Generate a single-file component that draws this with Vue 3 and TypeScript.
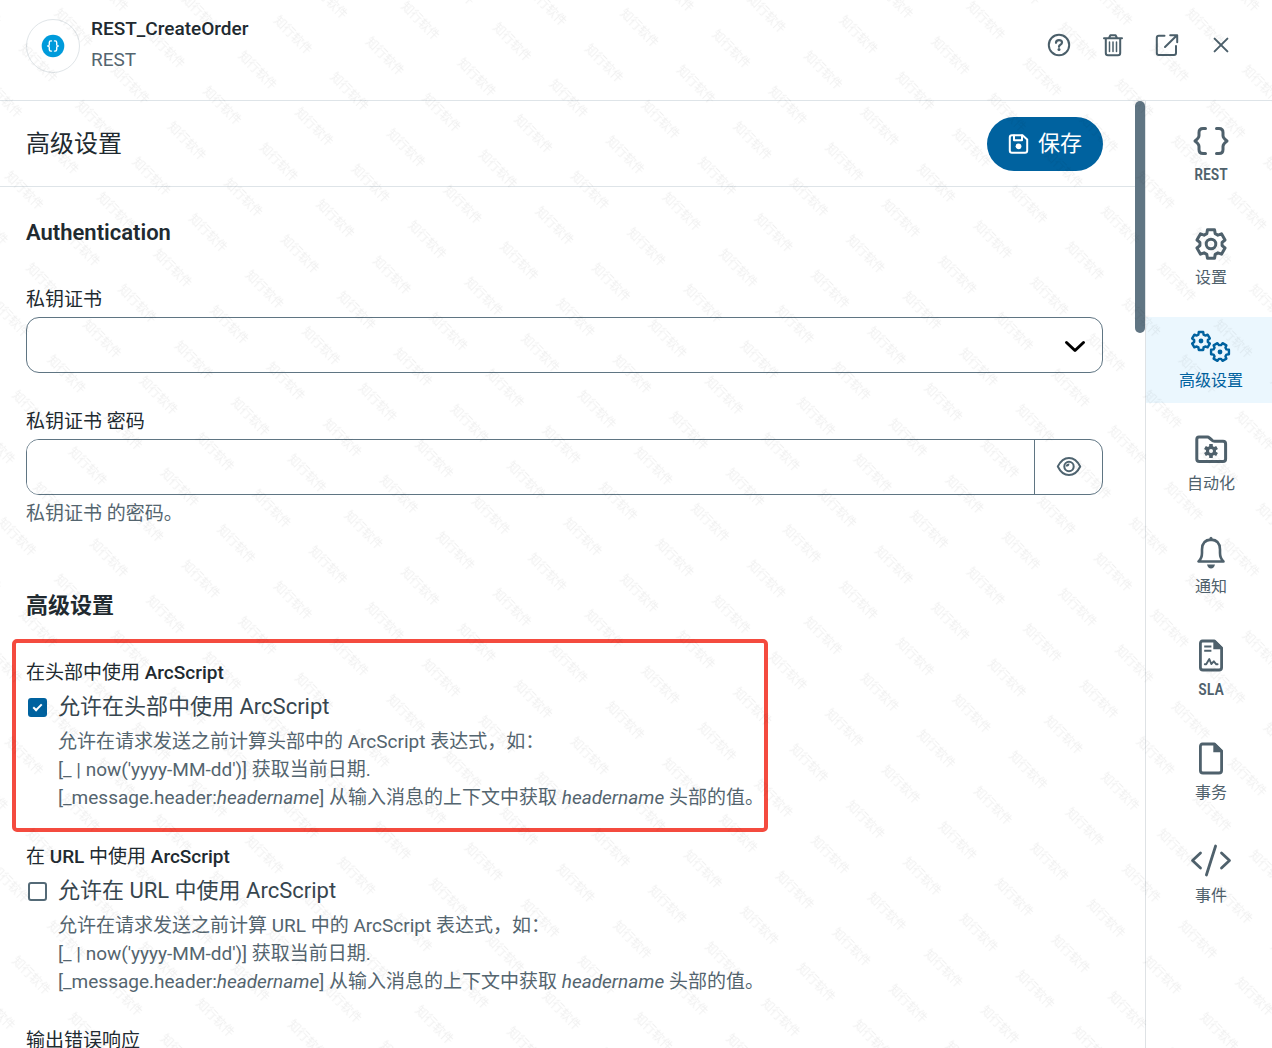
<script setup lang="ts">
import { ref } from 'vue'

interface NavItem {
  id: string
  label: string
}

const navItems: NavItem[] = [
  { id: 'rest', label: 'REST' },
  { id: 'settings', label: '设置' },
  { id: 'advanced', label: '高级设置' },
  { id: 'automation', label: '自动化' },
  { id: 'alerts', label: '通知' },
  { id: 'sla', label: 'SLA' },
  { id: 'transactions', label: '事务' },
  { id: 'events', label: '事件' },
]

const active = ref('advanced')
const certificate = ref('')
const password = ref('')
const headerScript = ref(true)
const urlScript = ref(false)

// Outline of a six-toothed cog; `turn` rotates the teeth, in degrees.
function gear(cx: number, cy: number, outer: number, inner: number, turn = 0): string {
  const points: string[] = []
  for (let tooth = 0; tooth < 6; tooth++) {
    const mid = tooth * 60 - 90 + turn
    const corners: [number, number][] = [
      [mid - 22, inner],
      [mid - 14, outer],
      [mid + 14, outer],
      [mid + 22, inner],
    ]
    for (const [deg, r] of corners) {
      const a = (deg * Math.PI) / 180
      points.push(`${(cx + r * Math.cos(a)).toFixed(2)} ${(cy + r * Math.sin(a)).toFixed(2)}`)
    }
  }
  return `M${points.join('L')}Z`
}
</script>

<template>
  <div class="app">
    <header class="topbar">
      <span class="logo">
        <svg width="24" height="24" viewBox="0 0 24 24" aria-hidden="true">
          <circle cx="12" cy="12" r="11.3" fill="#009bdb" />
          <g fill="none" stroke="#fff" stroke-width="1.4">
            <path d="M10.5 6.9H9.8Q8.3 6.9 8.3 8.4V10.4Q8.3 12 6.7 12Q8.3 12 8.3 13.6V15.6Q8.3 17.1 9.8 17.1H10.5" />
            <path d="M13.5 6.9H14.2Q15.7 6.9 15.7 8.4V10.4Q15.7 12 17.3 12Q15.7 12 15.7 13.6V15.6Q15.7 17.1 14.2 17.1H13.5" />
          </g>
        </svg>
      </span>
      <div class="heading">
        <h1>REST_CreateOrder</h1>
        <p>REST</p>
      </div>
      <div class="actions">
        <button type="button" aria-label="帮助">
          <svg width="26" height="26" viewBox="0 0 26 26">
            <circle cx="13" cy="13" r="10.2" />
            <path d="M10 10.8Q10.1 8.2 13 8.2Q16 8.2 16 10.6Q16 12 14.4 12.8Q13 13.5 13 14.8" stroke-width="2.2" />
            <circle cx="13" cy="17.6" r="1.5" class="solid" />
          </svg>
        </button>
        <button type="button" aria-label="删除">
          <svg width="26" height="26" viewBox="0 0 26 26">
            <path d="M4 6.3H22M9 6L10.4 3.2H15.6L17 6M5.8 6.5V21Q5.8 23.2 8 23.2H18Q20.2 23.2 20.2 21V6.5" />
            <path d="M9.5 10V19.5M13 10V19.5M16.5 10V19.5" stroke-width="1.5" />
          </svg>
        </button>
        <button type="button" aria-label="在新窗口中打开">
          <svg width="26" height="26" viewBox="0 0 26 26">
            <path d="M10.5 3.8H4.8Q2.8 3.8 2.8 5.8V21Q2.8 23 4.8 23H20Q22 23 22 21V14" />
            <path d="M11 15L23 3.2M16.2 3.2H23.2V10.2" />
          </svg>
        </button>
        <button type="button" aria-label="关闭">
          <svg width="26" height="26" viewBox="0 0 26 26">
            <path d="M6.6 6.6L19.4 19.4M19.4 6.6L6.6 19.4" />
          </svg>
        </button>
      </div>
    </header>

    <div class="body">
      <main class="panel">
        <div class="toolbar">
          <h2>高级设置</h2>
          <button type="button" class="save">
            <svg width="21" height="21" viewBox="0 0 21 21" aria-hidden="true">
              <path d="M4 1.3H14.5L19.2 5.5V16.5Q19.2 18.7 17 18.7H4Q1.8 18.7 1.8 16.5V3.5Q1.8 1.3 4 1.3Z" />
              <path d="M6 1.5V6.3H14V1.5" />
              <circle cx="10.5" cy="12.3" r="2.9" fill="#fff" stroke="none" />
            </svg>
            保存
          </button>
        </div>

        <form class="form" @submit.prevent>
          <h3>Authentication</h3>
          <div class="field">
            <label for="cert">私钥证书</label>
            <div class="select">
              <select id="cert" v-model="certificate">
                <option value=""></option>
              </select>
              <svg class="chevron" width="24" height="16" viewBox="0 0 24 16" aria-hidden="true">
                <path d="M3.5 3.5L12 11.5L20.5 3.5" />
              </svg>
            </div>
          </div>
          <div class="field">
            <label for="cert-password">私钥证书 密码</label>
            <div class="password">
              <input id="cert-password" v-model="password" type="password" />
              <button type="button" aria-label="显示密码">
                <svg width="26" height="22" viewBox="0 0 26 22">
                  <path d="M1.8 10.5Q6 1.9 13 1.9Q20 1.9 24.2 10.5Q20 19.1 13 19.1Q6 19.1 1.8 10.5Z" />
                  <circle cx="13" cy="10.5" r="4.7" />
                  <path d="M9.8 10.6Q9.8 7.4 13.4 7.4Q13.6 10.6 9.8 10.6Z" class="solid" />
                </svg>
              </button>
            </div>
            <p class="help">私钥证书 的密码。</p>
          </div>

          <h3 class="section">高级设置</h3>
          <div class="option marked">
            <h4>在头部中使用 <b>ArcScript</b></h4>
            <label class="check">
              <input v-model="headerScript" type="checkbox" />
              <span>允许在头部中使用 ArcScript</span>
            </label>
            <p class="help">
              允许在请求发送之前计算头部中的 ArcScript 表达式，如：<br />
              [_ | now('yyyy-MM-dd')] 获取当前日期.<br />
              [_message.header:<em>headername</em>] 从输入消息的上下文中获取 <em>headername</em> 头部的值。
            </p>
          </div>
          <div class="option">
            <h4>在 <b>URL</b> 中使用 <b>ArcScript</b></h4>
            <label class="check">
              <input v-model="urlScript" type="checkbox" />
              <span>允许在 URL 中使用 ArcScript</span>
            </label>
            <p class="help">
              允许在请求发送之前计算 URL 中的 ArcScript 表达式，如：<br />
              [_ | now('yyyy-MM-dd')] 获取当前日期.<br />
              [_message.header:<em>headername</em>] 从输入消息的上下文中获取 <em>headername</em> 头部的值。
            </p>
          </div>
          <div class="option">
            <h4>输出错误响应</h4>
          </div>
        </form>
        <span class="thumb"></span>
      </main>

      <nav class="side">
        <button
          v-for="item in navItems"
          :key="item.id"
          type="button"
          :class="{ active: item.id === active, latin: /^[A-Z]+$/.test(item.label) }"
          @click="active = item.id"
        >
          <svg width="42" height="36" viewBox="0 0 42 36" aria-hidden="true">
            <g v-if="item.id === 'rest'">
              <path d="M15.5 5.5H13Q9 5.5 9 9.5V12.5Q9 15 5 18Q9 21 9 23.5V26.5Q9 30.5 13 30.5H15.5" />
              <path d="M26.5 5.5H29Q33 5.5 33 9.5V12.5Q33 15 37 18Q33 21 33 23.5V26.5Q33 30.5 29 30.5H26.5" />
            </g>
            <g v-else-if="item.id === 'settings'">
              <path :d="gear(21, 18, 14.6, 11.2)" />
              <circle cx="21" cy="18" r="4.8" />
            </g>
            <g v-else-if="item.id === 'advanced'" stroke-width="2.4">
              <path :d="gear(11, 12, 9.2, 6.9)" />
              <circle cx="11" cy="12" r="2.4" class="solid" />
              <path :d="gear(30, 23, 9.2, 6.9, 30)" />
              <circle cx="30" cy="23" r="2.4" class="solid" />
            </g>
            <g v-else-if="item.id === 'automation'">
              <path d="M9 5H17.5Q18.5 5 19.5 6L22 8.2Q23 9.2 24.5 9.2H33Q35.6 9.2 35.6 11.8V27Q35.6 29.6 33 29.6H9.4Q6.8 29.6 6.8 27V7.4Q6.8 5 9 5Z" />
              <path :d="gear(21, 19, 7.2, 5)" class="solid" />
              <circle cx="21" cy="19" r="2" class="hole" />
            </g>
            <g v-else-if="item.id === 'alerts'">
              <path d="M8.5 26.5H33.5Q30 23.5 30 18V14.5Q30 5 21 4.6Q12 5 12 14.5V18Q12 23.5 8.5 26.5Z" stroke-width="2.6" />
              <path d="M19.3 4.5Q19.3 1.8 21 1.8Q22.7 1.8 22.7 4.5Z" class="solid" />
              <path d="M17 29.5H25Q24 33.5 21 33.5Q18 33.5 17 29.5Z" class="solid" />
            </g>
            <g v-else-if="item.id === 'sla'">
              <path d="M12.5 3H24.5L31.6 10V29.5Q31.6 32 29 32H13Q10.4 32 10.4 29.5V5.5Q10.4 3 12.5 3Z" stroke-width="2.8" />
              <path d="M23.3 2.5H25.5L32.5 9.2V11.3H23.3Z" class="solid" />
              <path d="M14.2 8.5H21.4M14.2 12.8H21.4" stroke-width="2" stroke-linecap="butt" />
              <path d="M14.8 26.3H16.2L19.3 21L21.3 26L23.8 23.3L26.3 26.3H27.6" stroke-width="1.9" />
            </g>
            <g v-else-if="item.id === 'transactions'">
              <path d="M12.5 3H24.5L31.6 10V29.5Q31.6 32 29 32H13Q10.4 32 10.4 29.5V5.5Q10.4 3 12.5 3Z" stroke-width="2.8" />
              <path d="M23.3 2.5H25.5L32.5 9.2V11.3H23.3Z" class="solid" />
            </g>
            <g v-else stroke-width="2.8">
              <path d="M10.5 9L2.5 16.5L10.5 24M31.5 9L39.5 16.5L31.5 24M25.6 2L16.4 31" />
            </g>
          </svg>
          <span>{{ item.label }}</span>
        </button>
      </nav>
    </div>

    <svg class="watermark" width="100%" height="100%" aria-hidden="true">
      <defs>
        <pattern id="mark" x="32" y="-57" width="80" height="50" patternUnits="userSpaceOnUse" patternTransform="rotate(45)">
          <text x="40" y="29" text-anchor="middle">知行软件</text>
        </pattern>
      </defs>
      <rect width="100%" height="100%" fill="url(#mark)" />
    </svg>
  </div>
</template>

<style>
body {
  margin: 0;
}
</style>

<style scoped>
*,
*::before,
*::after {
  box-sizing: border-box;
}

.app {
  position: relative;
  display: flex;
  flex-direction: column;
  height: 100vh;
  overflow: hidden;
  background: #fff;
  color: #212a30;
  font-family: Roboto, "Noto Sans CJK SC", sans-serif;
  font-size: 19px;
  line-height: 28px;
}

h1, h2, h3, h4, p {
  margin: 0;
  font-size: inherit;
}

button {
  margin: 0;
  padding: 0;
  border: 0;
  background: none;
  color: inherit;
  font: inherit;
  cursor: pointer;
}

svg {
  display: block;
  flex: none;
  fill: none;
  stroke: currentColor;
  stroke-width: 2;
  stroke-linecap: round;
  stroke-linejoin: round;
}

.solid {
  fill: currentColor;
  stroke: none;
}

.topbar {
  display: flex;
  flex: none;
  gap: 11px;
  height: 101px;
  padding: 15px 24px 0 26px;
  border-bottom: 1px solid #dee4e8;
}

.logo {
  display: flex;
  align-items: center;
  justify-content: center;
  width: 54px;
  height: 54px;
  margin-top: 4px;
  border: 1px solid #e0e5e8;
  border-radius: 50%;
}

.logo svg {
  stroke: none;
}

.heading {
  flex: 1;
}

.heading h1 {
  font-weight: 500;
}

.heading p {
  margin-top: 3px;
  color: #54656f;
}

.actions {
  display: flex;
  height: 60px;
  color: #4b5f6a;
}

.actions button {
  display: flex;
  align-items: center;
  justify-content: center;
  width: 54px;
}

.body {
  display: flex;
  flex: 1;
  min-height: 0;
}

.panel {
  position: relative;
  flex: 1;
  overflow: hidden;
}

.thumb {
  position: absolute;
  top: 0;
  right: 0;
  width: 10px;
  height: 232px;
  border-radius: 5px;
  background: #607583;
}

.toolbar {
  display: flex;
  align-items: center;
  justify-content: space-between;
  padding: 16px 42px 15px 26px;
  border-bottom: 1px solid #dee4e8;
}

.toolbar h2 {
  font-size: 24px;
  font-weight: 400;
}

.save {
  display: flex;
  align-items: center;
  gap: 9px;
  height: 54px;
  padding: 0 21px;
  border-radius: 27px;
  background: #00629f;
  color: #fff;
  font-size: 22px;
}

.form {
  padding: 30px 42px 0 26px;
}

h3 {
  font-size: 22px;
  font-weight: 600;
  line-height: 32px;
}

h3.section {
  margin: 62px 0 37px;
}

.field {
  margin-top: 35px;
}

h3 + .field {
  margin-top: 37px;
}

.field > label {
  display: block;
  margin-bottom: 3px;
}

.select {
  position: relative;
}

select {
  display: block;
  width: 100%;
  height: 56px;
  padding: 0 56px 0 16px;
  border: 1px solid #5f7583;
  border-radius: 13px;
  background: #fff;
  font: inherit;
  appearance: none;
}

.chevron {
  position: absolute;
  top: 22px;
  right: 16px;
  color: #000;
  stroke-width: 3;
  pointer-events: none;
}

.password {
  display: flex;
  height: 56px;
  border: 1px solid #5f7583;
  border-radius: 13px;
  overflow: hidden;
}

.password input {
  flex: 1;
  min-width: 0;
  padding: 0 16px;
  border: 0;
  font: inherit;
}

.password button {
  display: flex;
  align-items: center;
  justify-content: center;
  width: 68px;
  border-left: 1px solid #5f7583;
  color: #4f6470;
}

.help {
  margin-top: 5px;
  color: #54656f;
}

.option {
  position: relative;
  margin-bottom: 31px;
}

.option h4 {
  font-weight: 400;
}

.option b {
  font-weight: 500;
}

.option .help {
  padding-left: 32px;
}

.marked::after {
  content: "";
  position: absolute;
  top: -20px;
  bottom: -20px;
  left: -14px;
  width: 756px;
  border: 4px solid #f44b3f;
  border-radius: 5px;
  pointer-events: none;
}

.check {
  display: flex;
  align-items: center;
  gap: 11px;
  margin-top: 4px;
  padding-left: 2px;
  color: #37464f;
  font-size: 22px;
  line-height: 32px;
}

.check input {
  position: relative;
  width: 19px;
  height: 19px;
  margin: 0;
  border: 2px solid #546a77;
  border-radius: 3px;
  background: #fff;
  appearance: none;
}

.check input:checked {
  border-color: #00629f;
  background: #00629f;
}

.check input:checked::before {
  content: "";
  position: absolute;
  top: 4px;
  left: 3px;
  width: 9px;
  height: 5px;
  border: solid #fff;
  border-width: 0 0 2px 2px;
  transform: rotate(-45deg);
}

.side {
  display: flex;
  flex: none;
  flex-direction: column;
  gap: 17px;
  width: 127px;
  padding-top: 10px;
  border-left: 1px solid #dee2e5;
}

.side button {
  display: flex;
  flex: none;
  flex-direction: column;
  align-items: center;
  gap: 4px;
  height: 86px;
  padding-top: 12px;
  padding-left: 4px;
  color: #4f616c;
  font-size: 16px;
  line-height: 24px;
}

.side svg {
  stroke-width: 3;
}

.side .active {
  background: #ebf7fe;
  color: #00629f;
}

.side .latin {
  font-family: "Roboto Condensed", Roboto, sans-serif;
  font-weight: 500;
}

.hole {
  fill: #fff;
  stroke: none;
}

.watermark {
  position: absolute;
  inset: 0;
  stroke: none;
  pointer-events: none;
}

.watermark text {
  fill: #000;
  fill-opacity: 0.06;
  font-family: "Noto Sans CJK SC", sans-serif;
  font-size: 12px;
}
</style>
